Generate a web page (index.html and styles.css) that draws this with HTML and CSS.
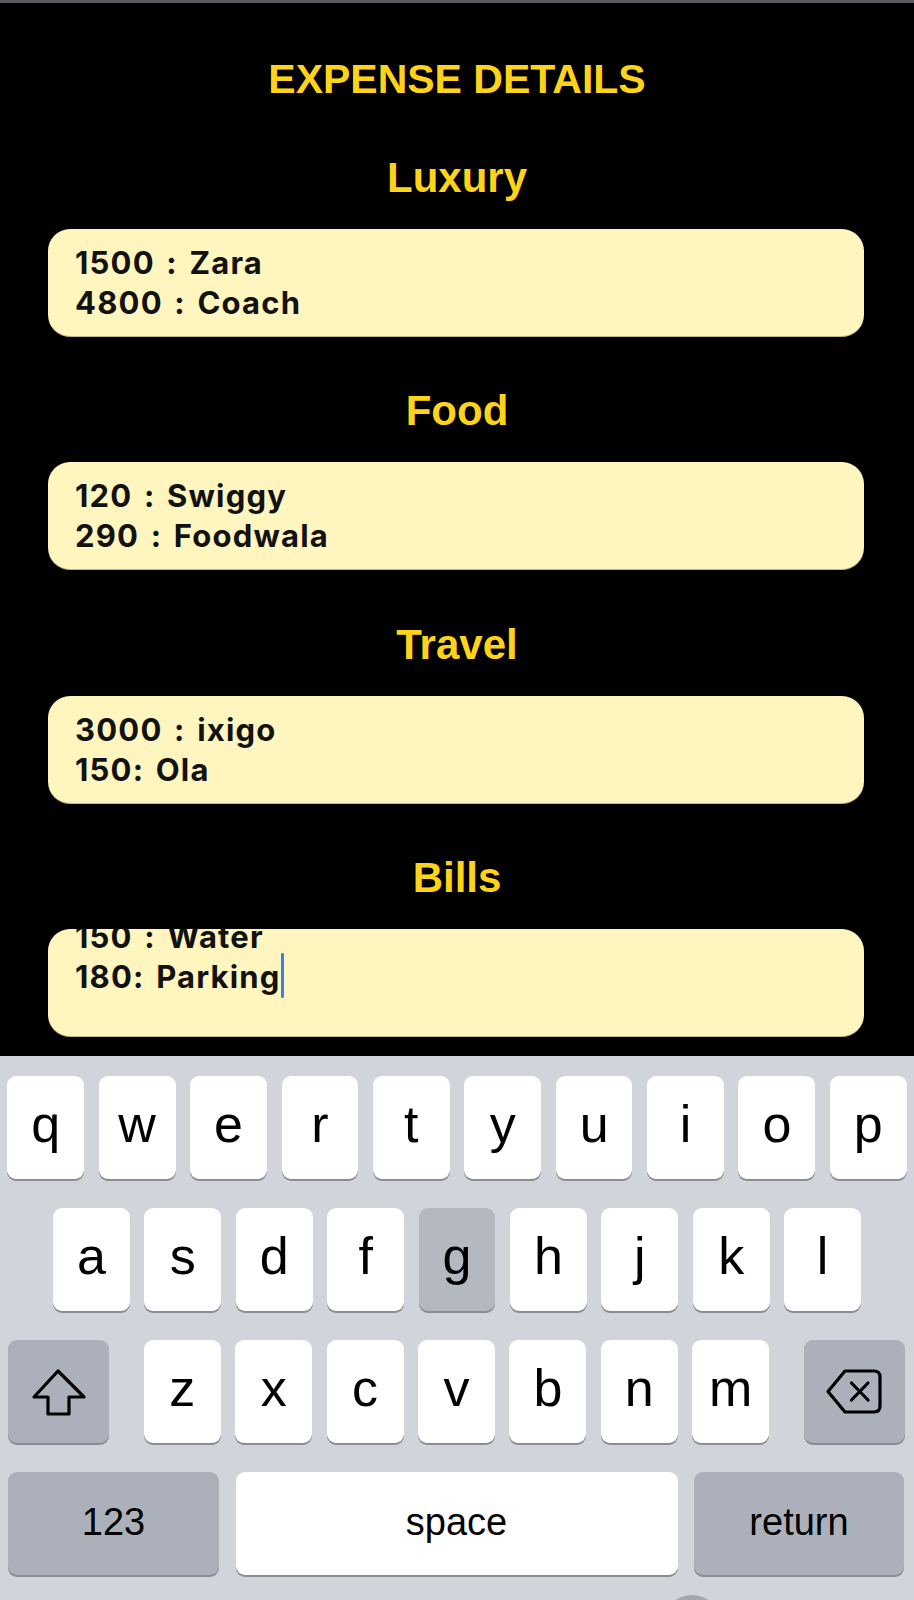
FILE: index.html
```html
<!DOCTYPE html>
<html lang="en">
<head>
<meta charset="utf-8">
<title>Expense Details</title>
<link rel="stylesheet" href="styles.css">
</head>
<body>
<div class="screen">
  <div class="topline"></div>
  <main class="content">
    <h1 class="title">EXPENSE DETAILS</h1>
    <section class="category">
      <h2 class="cat-title">Luxury</h2>
      <div class="entry-box"><div class="entry-text">1500 : Zara<br>4800 : Coach</div></div>
    </section>
    <section class="category">
      <h2 class="cat-title">Food</h2>
      <div class="entry-box"><div class="entry-text">120 : Swiggy<br>290 : Foodwala</div></div>
    </section>
    <section class="category">
      <h2 class="cat-title">Travel</h2>
      <div class="entry-box"><div class="entry-text">3000 : ixigo<br>150: Ola</div></div>
    </section>
    <section class="category">
      <h2 class="cat-title">Bills</h2>
      <div class="entry-box"><div class="entry-text scrolled">150 : Water<br>180: Parking<span class="caret"></span></div></div>
    </section>
  </main>
  <div class="keyboard">
    <div class="keys">
      <div class="krow">
        <div class="key">q</div><div class="key">w</div><div class="key">e</div><div class="key">r</div><div class="key">t</div><div class="key">y</div><div class="key">u</div><div class="key">i</div><div class="key">o</div><div class="key">p</div>
      </div>
      <div class="krow">
        <div class="key">a</div><div class="key">s</div><div class="key">d</div><div class="key">f</div><div class="key pressed">g</div><div class="key">h</div><div class="key">j</div><div class="key">k</div><div class="key">l</div>
      </div>
      <div class="krow r3">
        <div class="key dark mod icon">
          <svg width="56" height="48" viewBox="0 0 56 48"><path d="M27 3 L53 29 H38 V46 H17 V29 H3 Z" fill="none" stroke="#000" stroke-width="3.2" stroke-linejoin="round"/></svg>
        </div>
        <div class="letters">
          <div class="key">z</div><div class="key">x</div><div class="key">c</div><div class="key">v</div><div class="key">b</div><div class="key">n</div><div class="key">m</div>
        </div>
        <div class="key dark mod icon">
          <svg width="60" height="48" viewBox="0 0 60 48"><path d="M21 3 H50 Q56 3 56 9 V38 Q56 44 50 44 H21 L4 23.5 Z" fill="none" stroke="#000" stroke-width="3.2" stroke-linejoin="round"/><path d="M27.5 15 L44 32 M44 15 L27.5 32" stroke="#000" stroke-width="3.2" stroke-linecap="round"/></svg>
        </div>
      </div>
      <div class="krow r4">
        <div class="key dark small k123">123</div>
        <div class="key small kspace">space</div>
        <div class="key dark small kreturn">return</div>
      </div>
    </div>
    <div class="home-btn"></div>
  </div>
</div>
</body>
</html>
```
FILE: styles.css
```css
html, body {
  margin: 0;
  padding: 0;
  background: #000;
  overflow: hidden;
}

.screen {
  width: 914px;
  height: 1600px;
  overflow: hidden;
  display: flex;
  flex-direction: column;
  background: #000;
}

.topline {
  height: 3px;
  flex: none;
  background: #5b5b60;
}

.content {
  padding-top: 52px;
  display: flex;
  flex-direction: column;
  gap: 50.6px;
}

.title {
  margin: 0;
  font: 700 41px/48px "Liberation Sans", Arial, sans-serif;
  color: #ffd318;
  text-align: center;
}

.category {
  display: flex;
  flex-direction: column;
  gap: 27px;
}

.cat-title {
  margin: 0;
  font: 700 42px/48px "Liberation Sans", Arial, sans-serif;
  color: #ffd318;
  text-align: center;
}

.entry-box {
  margin: 0 50px 0 48px;
  height: 108px;
  box-sizing: border-box;
  padding: 14px 27px 0;
  background: #fff5be;
  border-radius: 22px;
  overflow: hidden;
  box-shadow: inset 0 -1px 0 rgba(90, 70, 0, 0.35);
}

.entry-text {
  font: 700 31px/40px Inter, "Liberation Sans", Arial, sans-serif;
  letter-spacing: 1.2px;
  word-spacing: 3px;
  color: #121212;
  white-space: nowrap;
}

.entry-text.scrolled {
  margin-top: -26px;
}

.caret {
  display: inline-block;
  width: 3px;
  height: 45px;
  margin: -5px 0 0 0;
  vertical-align: -10px;
  background: #3d7ef2;
  border-radius: 1px;
}

.keyboard {
  margin-top: auto;
  flex: none;
  height: 544px;
  box-sizing: border-box;
  padding-top: 20px;
  background: #d1d4da;
  overflow: hidden;
  display: flex;
  flex-direction: column;
}

.keys {
  display: flex;
  flex-direction: column;
  gap: 29px;
}

.krow {
  display: flex;
  justify-content: center;
  gap: 14.6px;
  height: 103px;
}

.key {
  width: 76.8px;
  height: 103px;
  box-sizing: border-box;
  padding-top: 22px;
  display: flex;
  justify-content: center;
  align-items: flex-start;
  background: #fff;
  border-radius: 9px;
  box-shadow: 0 2px 0 #898c93;
  font: 400 52px/1 "Liberation Sans", Arial, sans-serif;
  color: #000;
}

.key.pressed {
  background: #b4b8c1;
}

.key.dark {
  background: #abb0ba;
}

.key.icon {
  padding-top: 0;
  align-items: center;
}

.krow.r3 {
  justify-content: space-between;
  padding: 0 9px 0 8px;
}

.letters {
  display: flex;
  gap: 14.6px;
}

.key.mod {
  width: 101px;
}

.krow.r4 {
  justify-content: flex-start;
  padding: 0 10px 0 8px;
  gap: 16.5px;
}

.key.small {
  font-size: 38px;
  padding-top: 31px;
}

.k123 {
  width: 211px;
}

.kspace {
  flex: 1;
}

.key.kreturn {
  width: 210px;
}

.home-btn {
  flex: none;
  width: 58px;
  height: 58px;
  margin: 20px 0 0 663px;
  border-radius: 50%;
  background: #a3a6ae;
}
```
